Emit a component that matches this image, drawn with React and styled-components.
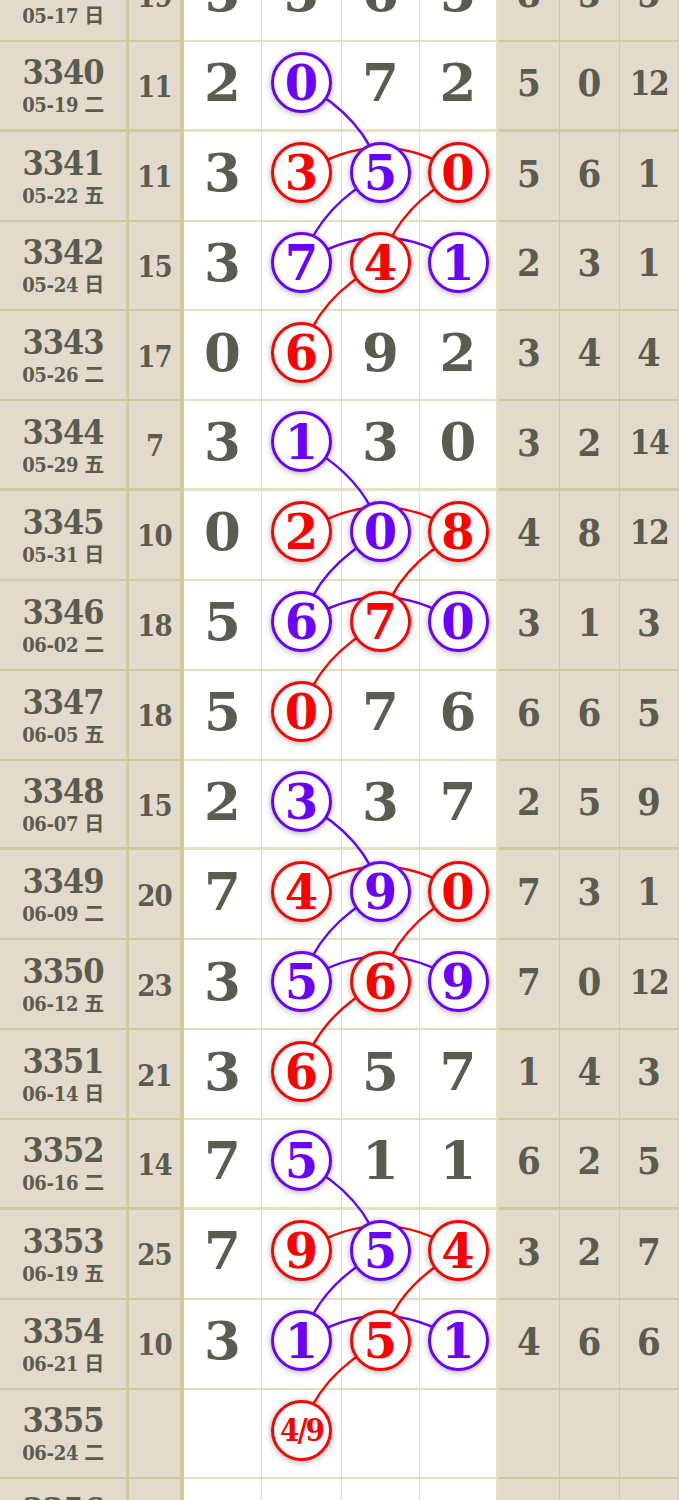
import React from 'react';
import styled, { createGlobalStyle } from 'styled-components';

const ROW_H = 89.85;
const BLUE = '#6a00ff';
const RED = '#ff0000';
const INK = '#5a5c50';
const BEIGE = '#e3dacb';
const LINE = 'rgba(185,170,85,0.38)';
const FONT = '"DejaVu Serif", "Noto Sans CJK SC", serif';

const Global = createGlobalStyle`
  html, body { margin: 0; padding: 0; background: #fff; }
  body { overflow: hidden; font-family: ${FONT}; }
`;

const Viewport = styled.div`
  width: 679px;
  height: 1500px;
  overflow: hidden;
`;

const Table = styled.div`
  position: relative;
  margin-top: -48px;
`;

const Row = styled.div`
  display: grid;
  grid-template-columns: 129px 55px 78px 80px 78px 79px 61px 60px 59px;
  height: ${ROW_H}px;
`;

const Cell = styled.div`
  box-sizing: border-box;
  height: 100%;
  display: flex;
  flex-direction: column;
  align-items: center;
  justify-content: center;
  color: ${INK};
  font-weight: 700;
  line-height: 1;
  border-bottom: ${(p) => (p.$thick ? 3.5 : 2)}px solid ${LINE};
`;

const IssueCell = styled(Cell)`
  background: ${BEIGE};
  border-right: 3px solid ${LINE};
  gap: 6px;
`;

const IssueNo = styled.div`
  font-size: 34px;
  font-stretch: condensed;
  letter-spacing: -1px;
`;

const IssueDate = styled.div`
  font-size: 20px;
  font-stretch: condensed;
  letter-spacing: -0.3px;
`;

const SumCell = styled(Cell)`
  background: ${BEIGE};
  border-right: 4px solid ${LINE};
  font-size: 29px;
  font-stretch: condensed;
  letter-spacing: -1px;
  padding-top: 4px;
`;

const DigitCell = styled(Cell)`
  background: #fff;
  border-right: ${(p) => (p.$last ? 3 : 1.5)}px solid ${LINE};
  font-size: 53px;
  padding-bottom: 6px;
`;

const StatCell = styled(Cell)`
  background: ${BEIGE};
  border-right: 1.5px solid ${LINE};
  font-size: ${(p) => (p.$wide ? 33 : 38)}px;
  font-stretch: condensed;
  letter-spacing: ${(p) => (p.$wide ? -1.5 : 0)}px;
  padding-bottom: 4px;
`;

const Ball = styled.div`
  position: relative;
  z-index: 2;
  width: 61px;
  height: 61px;
  box-sizing: border-box;
  border-radius: 50%;
  border: 3px solid ${(p) => p.$color};
  background: #fff;
  box-shadow: 0 1px 6px rgba(0, 0, 0, 0.35);
  color: ${(p) => p.$color};
  display: flex;
  align-items: center;
  justify-content: center;
  font-size: ${(p) => (p.$small ? 31 : 48)}px;
  font-stretch: ${(p) => (p.$small ? 'condensed' : 'normal')};
  letter-spacing: ${(p) => (p.$small ? -2 : 0)}px;
  font-weight: 700;
  line-height: 1;
  padding-top: 1px;
`;

const LinkLayer = styled.svg`
  position: absolute;
  left: 0;
  top: 0;
  z-index: 1;
  pointer-events: none;
  overflow: visible;
`;

// rows: issue, date, sum, digits[4], balls [c2,c3,c4] colour codes, stats
const ROWS = [
  ['3339', '05-17 日', '19', ['5', '5', '6', '5'], [null, null, null], ['8', '5', '5']],
  ['3340', '05-19 二', '11', ['2', '0', '7', '2'], ['b', null, null], ['5', '0', '12']],
  ['3341', '05-22 五', '11', ['3', '3', '5', '0'], ['r', 'b', 'r'], ['5', '6', '1']],
  ['3342', '05-24 日', '15', ['3', '7', '4', '1'], ['b', 'r', 'b'], ['2', '3', '1']],
  ['3343', '05-26 二', '17', ['0', '6', '9', '2'], ['r', null, null], ['3', '4', '4']],
  ['3344', '05-29 五', '7', ['3', '1', '3', '0'], ['b', null, null], ['3', '2', '14']],
  ['3345', '05-31 日', '10', ['0', '2', '0', '8'], ['r', 'b', 'r'], ['4', '8', '12']],
  ['3346', '06-02 二', '18', ['5', '6', '7', '0'], ['b', 'r', 'b'], ['3', '1', '3']],
  ['3347', '06-05 五', '18', ['5', '0', '7', '6'], ['r', null, null], ['6', '6', '5']],
  ['3348', '06-07 日', '15', ['2', '3', '3', '7'], ['b', null, null], ['2', '5', '9']],
  ['3349', '06-09 二', '20', ['7', '4', '9', '0'], ['r', 'b', 'r'], ['7', '3', '1']],
  ['3350', '06-12 五', '23', ['3', '5', '6', '9'], ['b', 'r', 'b'], ['7', '0', '12']],
  ['3351', '06-14 日', '21', ['3', '6', '5', '7'], ['r', null, null], ['1', '4', '3']],
  ['3352', '06-16 二', '14', ['7', '5', '1', '1'], ['b', null, null], ['6', '2', '5']],
  ['3353', '06-19 五', '25', ['7', '9', '5', '4'], ['r', 'b', 'r'], ['3', '2', '7']],
  ['3354', '06-21 日', '10', ['3', '1', '5', '1'], ['b', 'r', 'b'], ['4', '6', '6']],
  ['3355', '06-24 二', '', ['', '4/9', '', ''], ['r', null, null], ['', '', '']],
  ['3356', '06-26 五', '', ['', '', '', ''], [null, null, null], ['', '', '']],
];

const COL_X = { 2: 302, 3: 381, 4: 459.5 };
const ballY = (r) => r * ROW_H + 42;

function diag(r1, c1, r2, c2) {
  const x1 = COL_X[c1];
  const y1 = ballY(r1);
  const x2 = COL_X[c2];
  const y2 = ballY(r2);
  const cx = x2 + 0.2 * (x1 - x2);
  const cy = y1 + 0.37 * (y2 - y1);
  return `M${x1} ${y1} Q${cx} ${cy} ${x2} ${y2}`;
}

function arc(r) {
  const y = ballY(r);
  return `M${COL_X[2]} ${y} Q${(COL_X[2] + COL_X[4]) / 2} ${y - 52} ${COL_X[4]} ${y}`;
}

const LINKS = [];
for (let m = 0; m < 4; m++) {
  const r0 = 1 + 4 * m;
  const r1 = r0 + 1;
  const r2 = r0 + 2;
  const r3 = r0 + 3;
  LINKS.push([diag(r0, 2, r1, 3), BLUE]);
  LINKS.push([diag(r1, 3, r2, 2), BLUE]);
  LINKS.push([arc(r2), BLUE]);
  LINKS.push([arc(r1), RED]);
  LINKS.push([diag(r1, 4, r2, 3), RED]);
  LINKS.push([diag(r2, 3, r3, 2), RED]);
}

const colorOf = (c) => (c === 'b' ? BLUE : RED);

export default function App() {
  return (
    <Viewport>
      <Global />
      <Table>
        <LinkLayer width="679" height={ROWS.length * ROW_H}>
          {LINKS.map(([d, c], i) => (
            <path key={i} d={d} fill="none" stroke={c} strokeWidth="2.4" />
          ))}
        </LinkLayer>
        {ROWS.map(([issue, date, sum, digits, balls, stats]) => {
          const num = Number(issue);
          const thick = num % 4 === 0;
          return (
            <Row key={issue}>
              <IssueCell $thick={thick}>
                <IssueNo>{issue}</IssueNo>
                <IssueDate>{date}</IssueDate>
              </IssueCell>
              <SumCell $thick={thick}>{sum}</SumCell>
              {digits.map((d, di) => {
                const ball = di > 0 ? balls[di - 1] : null;
                return (
                  <DigitCell key={di} $thick={thick} $last={di === 3}>
                    {ball ? (
                      <Ball $color={colorOf(ball)} $small={d.length > 1}>
                        {d}
                      </Ball>
                    ) : (
                      d
                    )}
                  </DigitCell>
                );
              })}
              {stats.map((s, si) => (
                <StatCell key={si} $thick={thick} $wide={s.length > 1}>
                  {s}
                </StatCell>
              ))}
            </Row>
          );
        })}
      </Table>
    </Viewport>
  );
}
